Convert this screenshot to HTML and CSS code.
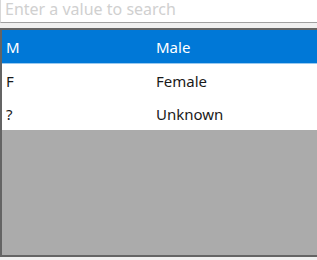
FILE: index.html
```html
<!DOCTYPE html>
<html lang="en">
<head>
    <meta charset="UTF-8">
    <title>Lookup</title>
    <link rel="stylesheet" href="styles.css">
</head>
<body>
    <div class="lookup">
        <input type="text" class="search" placeholder="Enter a value to search">
        <div class="grid">
            <div class="row selected"><span class="code">M</span><span class="desc">Male</span></div>
            <div class="row"><span class="code">F</span><span class="desc">Female</span></div>
            <div class="row"><span class="code">?</span><span class="desc">Unknown</span></div>
            <div class="empty"></div>
        </div>
    </div>
</body>
</html>
```

FILE: styles.css
```css
body {
    margin: 0;
    background-color: #f0f0f0;
    font-family: "Noto Sans", "Open Sans", sans-serif;
    font-size: 15px;
}
.lookup {
    width: 317px;
    height: 260px;
    display: flex;
    flex-direction: column;
}
.search {
    height: 23px;
    box-sizing: border-box;
    margin: 0;
    padding: 0 4px 4px 4px;
    border: 1px solid #a0a0a0;
    border-top: none;
    border-left-color: #d8d8d8;
    border-right: none;
    background-color: #fff;
    font-family: inherit;
    font-size: 16px;
    outline: none;
}
.search::placeholder {
    color: #d0d0d0;
}
.grid {
    margin-top: 5px;
    height: 229px;
    box-sizing: border-box;
    border-top: 2px solid #646464;
    border-left: 2px solid #646464;
    border-bottom: 2px solid #646464;
    display: flex;
    flex-direction: column;
}
.row {
    height: 33px;
    display: flex;
    align-items: center;
    background-color: #fff;
    color: #1a1a1a;
}
.row.selected {
    background-color: #0078d7;
    color: #fff;
    border-bottom: 1px solid #99c9ef;
}
.code {
    width: 150px;
    padding-left: 4px;
}
.empty {
    flex: 1;
    background-color: #ababab;
}
```
